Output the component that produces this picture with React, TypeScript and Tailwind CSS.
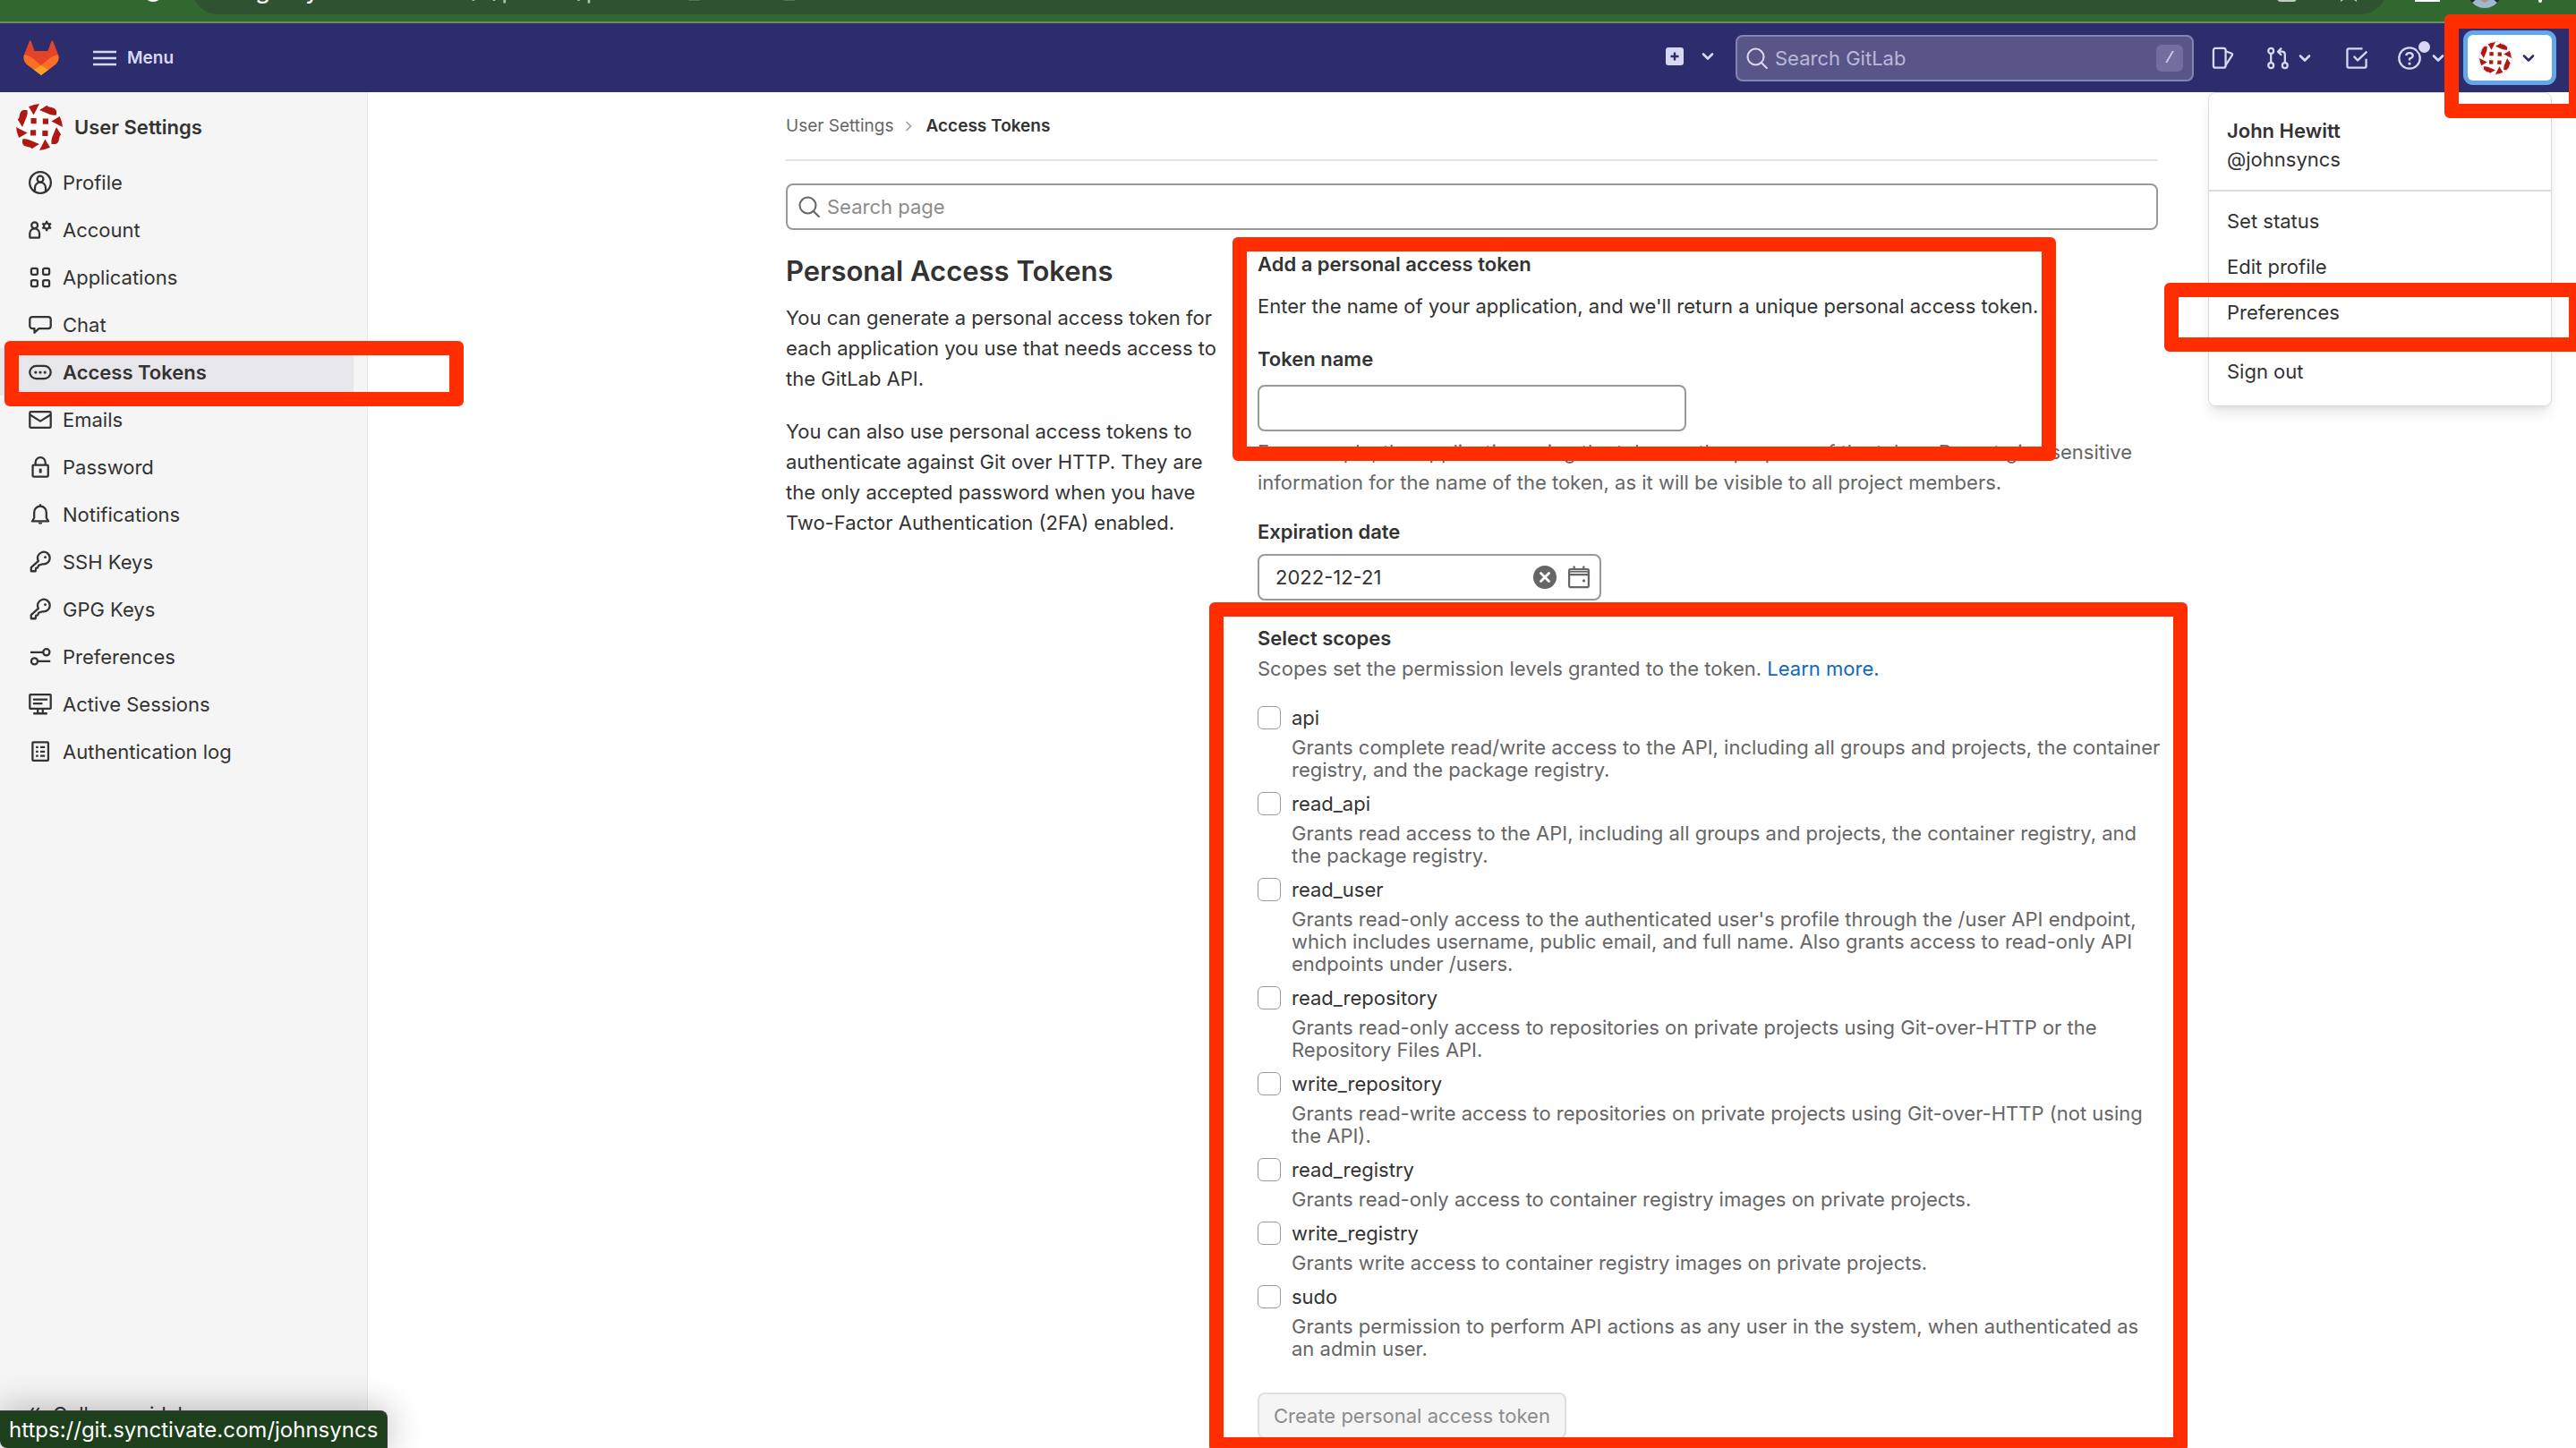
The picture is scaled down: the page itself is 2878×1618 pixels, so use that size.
import type { ReactNode } from "react";

type IconProps = { children: ReactNode; className?: string };

function Icon({ children, className = "size-[26px]" }: IconProps) {
  return (
    <svg
      viewBox="0 0 16 16"
      className={`shrink-0 ${className}`}
      fill="none"
      stroke="currentColor"
      strokeWidth="1.4"
      strokeLinejoin="round"
      aria-hidden="true"
    >
      {children}
    </svg>
  );
}

function Chevron({ className = "" }: { className?: string }) {
  return (
    <svg viewBox="0 0 14 14" className={`size-[14px] shrink-0 ${className}`} fill="none" stroke="currentColor" strokeWidth="2.6" strokeLinecap="round" strokeLinejoin="round" aria-hidden="true">
      <path d="M2 4.5l5 5 5-5" />
    </svg>
  );
}

function SearchIcon({ className = "size-6" }: { className?: string }) {
  return (
    <Icon className={className}>
      <circle cx="7" cy="7" r="6" />
      <path d="M11.2 11.4l4 4" strokeLinecap="round" />
    </Icon>
  );
}

function Identicon({ className = "" }: { className?: string }) {
  return (
    <svg viewBox="0 0 52 52" className={`shrink-0 ${className}`} aria-hidden="true">
      <circle cx="26" cy="26" r="26" fill="#fff" />
      <g fill="#ae1a13">
        {[0, 90, 180, 270].map((a) => (
          <g key={a} transform={`rotate(${a} 26 26)`}>
            <path d="M14 3.2Q20 .4 26 0l-6.4 12.6z" />
            <path d="M26 7l8.500-5.300q1 2 4 2 6 1 6.500 4.500v4.300q-4 .5-7-.5z" />
            <rect x="16.500" y="16" width="6.200" height="6.200" />
          </g>
        ))}
      </g>
    </svg>
  );
}

const keyIcon = (
  <Icon>
    <path d="M6.700 7.300A4.200 4.200 0 1 1 9.600 9.400L7 10.200l-.8 1.700-1.200.3-.3 2.100H1.700v-2.500z" />
    <circle cx="11.400" cy="4.700" r=".9" fill="currentColor" stroke="none" />
  </Icon>
);

const navItems: { label: string; icon: ReactNode; active?: boolean }[] = [
  {
    label: "Profile",
    icon: (
      <Icon>
        <circle cx="8" cy="8" r="7.300" />
        <circle cx="8" cy="5.600" r="2.100" />
        <path d="M4.300 13.800v-2.300a3.700 3.700 0 0 1 7.400 0v2.300" />
      </Icon>
    ),
  },
  {
    label: "Account",
    icon: (
      <Icon>
        <circle cx="4.100" cy="4.800" r="2.100" />
        <path d="M.8 12.900v-2.600a3.300 3.300 0 0 1 6.600 0v2.600q0 .4-.4.4H1.200q-.4 0-.4-.4z" />
        <circle cx="12.400" cy="5.200" r="1.900" />
        <path d="M12.400 1.700v1.600M12.400 7.100v1.600M9.400 3.500l1.300.8M14.100 6.100l1.300.8M9.400 6.900l1.300-.8M14.100 4.300l1.300-.8" />
      </Icon>
    ),
  },
  {
    label: "Applications",
    icon: (
      <Icon>
        <rect x="1.800" y="1.800" width="4.300" height="4.300" rx="1" />
        <rect x="9.900" y="1.800" width="4.300" height="4.300" rx="1" />
        <rect x="1.800" y="9.900" width="4.300" height="4.300" rx="1" />
        <rect x="9.900" y="9.900" width="4.300" height="4.300" rx="1" />
      </Icon>
    ),
  },
  {
    label: "Chat",
    icon: (
      <Icon>
        <path d="M2.600 2.500h10.800a1.800 1.800 0 0 1 1.800 1.800v4.400a1.800 1.800 0 0 1-1.800 1.800H7L4 13.400v-2.900H2.600A1.800 1.800 0 0 1 .8 8.700V4.300a1.800 1.800 0 0 1 1.800-1.800z" />
      </Icon>
    ),
  },
  {
    label: "Access Tokens",
    active: true,
    icon: (
      <Icon>
        <rect x=".8" y="3.600" width="14.400" height="8.800" rx="4.400" />
        <g fill="currentColor" stroke="none">
          <circle cx="4.800" cy="8" r="1" />
          <circle cx="8" cy="8" r="1" />
          <circle cx="11.200" cy="8" r="1" />
        </g>
      </Icon>
    ),
  },
  {
    label: "Emails",
    icon: (
      <Icon>
        <rect x=".8" y="2.500" width="14.400" height="11" rx=".8" />
        <path d="M1 4.600l7 4.400 7-4.400" />
      </Icon>
    ),
  },
  {
    label: "Password",
    icon: (
      <Icon>
        <rect x="2.800" y="6.500" width="10.600" height="8" rx=".6" />
        <path d="M4.700 6.500V4.700a3.400 3.400 0 0 1 6.800 0v1.800" />
        <path d="M8.100 9v3" strokeWidth="1.800" />
      </Icon>
    ),
  },
  {
    label: "Notifications",
    icon: (
      <Icon>
        <path d="M2.400 12.600h11.200l-1.400-2.300V6.400a4.200 4.200 0 0 0-8.400 0v3.900z" />
        <path d="M8 .8v1.400" />
        <path d="M6.600 13.400a1.400 1.200 0 0 0 2.800 0z" fill="currentColor" stroke="none" />
      </Icon>
    ),
  },
  { label: "SSH Keys", icon: keyIcon },
  { label: "GPG Keys", icon: keyIcon },
  {
    label: "Preferences",
    icon: (
      <Icon>
        <circle cx="12.200" cy="4.800" r="2.200" />
        <circle cx="4" cy="11" r="2.200" />
        <path d="M1.200 4.800H10M6.200 11h8.700" />
      </Icon>
    ),
  },
  {
    label: "Active Sessions",
    icon: (
      <Icon>
        <rect x=".8" y="1.300" width="14.400" height="9.700" rx=".4" />
        <path d="M3 4.700h10M3 7.500h6.500M6.300 11v3M9.700 11v3M3.200 14.300h9.600" />
      </Icon>
    ),
  },
  {
    label: "Authentication log",
    icon: (
      <Icon>
        <rect x="2.700" y="1.500" width="10.800" height="12.600" rx=".5" />
        <path d="M5 4.900h1.600M8 4.900h3.200M5 7.900h1.600M8 7.900h3.200M5 10.900h1.600M8 10.900h3.200" />
      </Icon>
    ),
  },
];

const scopes = [
  ["api", "Grants complete read/write access to the API, including all groups and projects, the container registry, and the package registry."],
  ["read_api", "Grants read access to the API, including all groups and projects, the container registry, and the package registry."],
  ["read_user", "Grants read-only access to the authenticated user's profile through the /user API endpoint, which includes username, public email, and full name. Also grants access to read-only API endpoints under /users."],
  ["read_repository", "Grants read-only access to repositories on private projects using Git-over-HTTP or the Repository Files API."],
  ["write_repository", "Grants read-write access to repositories on private projects using Git-over-HTTP (not using the API)."],
  ["read_registry", "Grants read-only access to container registry images on private projects."],
  ["write_registry", "Grants write access to container registry images on private projects."],
  ["sudo", "Grants permission to perform API actions as any user in the system, when authenticated as an admin user."],
];

function BrowserBar() {
  return (
    <div className="flex h-[26px] items-end overflow-hidden border-b-2 border-[#688f68] bg-[#31682f] pr-[38px] pl-[160px]">
      <span className="mr-[33px] mb-[22px] size-[22px] rounded-full border-2 border-white" />
      <div className="mb-2 flex h-14 flex-1 items-center rounded-full bg-[#2f5230] pr-7 pl-[70px] text-[28px] leading-[34px] text-[#b4c3b4]">
        <span className="text-white">git.synctivate.com</span>
        <span>/-/profile/personal_access_tokens</span>
        <span className="ml-auto flex h-7 items-end gap-11">
          <span className="h-7 w-[22px] rounded-[4px] bg-[#c3cbc3]" />
          <svg viewBox="0 0 24 24" className="size-7" fill="none" stroke="#c3cbc3" strokeWidth="2" aria-hidden="true">
            <path d="M12 2l3 7 7 .6-5.300 4.700L18.500 22 12 18l-6.500 4 1.800-7.700L2 9.600 9 9z" />
          </svg>
        </span>
      </div>
      <span className="mb-[22px] ml-8 h-7 w-7 bg-white" />
      <svg viewBox="0 0 40 40" className="mb-[14px] ml-[30px] size-10" aria-hidden="true">
        <circle cx="20" cy="20" r="19" fill="#1d2422" />
        <path d="M6 33l6-5h16l6 5q-6 6-14 6T6 33z" fill="#9fb9cf" />
        <path d="M13 20h14l-2 10-5 3-5-3z" fill="#b98f7c" />
      </svg>
      <span className="mb-[21px] ml-10 h-7 w-1 rounded-full bg-white" />
    </div>
  );
}

function UserMenu() {
  return (
    <div className="absolute top-[77px] right-[27px] z-10 w-[384px] rounded-lg border border-[#dbdbdb] bg-white px-5 pt-[26px] pb-[21px] text-[#333] shadow-lg">
      <p className="leading-8 font-semibold">John Hewitt</p>
      <p className="leading-8">@johnsyncs</p>
      <hr className="-mx-5 mt-[18px] mb-4 border-t-2 border-[#dbdbdb]" />
      <div className="flex flex-col gap-[17px]">
        <a href="#status">Set status</a>
        <a href="#edit">Edit profile</a>
        <a href="#preferences">Preferences</a>
      </div>
      <hr className="-mx-5 mt-3 mb-[18px] border-t-2 border-[#dbdbdb]" />
      <a href="#signout">Sign out</a>
    </div>
  );
}

function NavBar() {
  return (
    <header className="relative flex h-[77px] items-center bg-[#2d2d6d] pr-[27px] pl-[26px] text-[#d9d8f2]">
      <a href="#home" aria-label="GitLab">
        <svg viewBox="0 0 40 39" className="h-[39px] w-10" aria-hidden="true">
          <path d="M1 16L6.800 1q.9-1.600 1.800 0l4 11h14.800l4-11q.9-1.600 1.800 0L39 16 20 39z" fill="#e24329" />
          <path d="M1 16q6.500 1 13 7l6 5 6-5q6.500-6 13-7 2.300 6-2.500 10.700L20 39 3.500 26.700Q-1.300 22 1 16z" fill="#fc6d26" />
          <path d="M20 28l8 5-8 6-8-6z" fill="#fca326" />
        </svg>
      </a>
      <button type="button" className="ml-[38px] flex items-center gap-3 text-[19px] font-semibold">
        <svg viewBox="0 0 26 18" className="h-[18px] w-[26px]" stroke="currentColor" strokeWidth="2.400" aria-hidden="true">
          <path d="M0 2h26M0 9h26M0 16h26" />
        </svg>
        Menu
      </button>
      <button type="button" aria-label="Create new" className="mb-1 ml-auto flex items-center gap-5">
        <svg viewBox="0 0 20 20" className="size-5" aria-hidden="true">
          <rect width="20" height="20" rx="3" fill="currentColor" />
          <path d="M10 5.500v9M5.500 10h9" stroke="#2d2d6d" strokeWidth="2.400" />
        </svg>
        <Chevron />
      </button>
      <label className="ml-6 flex h-[52px] w-[512px] items-center gap-2 rounded-lg border-2 border-[#8583b4] bg-[#585689] px-[10px]">
        <SearchIcon />
        <input type="text" aria-label="Search GitLab" placeholder="Search GitLab" className="min-w-0 flex-1 bg-transparent placeholder:text-[#bab8da] focus:outline-none" />
        <kbd className="flex h-[30px] w-[30px] items-center justify-center rounded-md bg-[#716f9f] font-mono text-[19px]">/</kbd>
      </label>
      <button type="button" aria-label="Issues" className="ml-[19px]">
        <Icon>
          <rect x="1.800" y="1.200" width="8.400" height="13.400" rx="1.400" />
          <path d="M10.200 3.200l4.200 1.600q.6.300.4.900l-4.600 7.100" />
        </Icon>
      </button>
      <button type="button" aria-label="Merge requests" className="ml-9 flex items-center gap-[10px]">
        <Icon>
          <circle cx="3.200" cy="3" r="1.800" />
          <circle cx="3.200" cy="13" r="1.800" />
          <circle cx="12.800" cy="13" r="1.800" />
          <path d="M3.200 4.800v6.400M12.800 11.200V5.500q0-2-2-2H8.500M10.500 1L8 3.500 10.500 6" />
        </Icon>
        <Chevron />
      </button>
      <button type="button" aria-label="To-do list" className="ml-[38px]">
        <Icon>
          <path d="M14.500 8.500v5q0 1-1 1h-11q-1 0-1-1v-11q0-1 1-1H12" />
          <path d="M6 6.700L8.700 9.500 15 3.500" />
        </Icon>
      </button>
      <button type="button" aria-label="Help" className="relative ml-[33px] flex items-center gap-3">
        <Icon>
          <circle cx="8" cy="8" r="7.200" />
          <path d="M5.700 6.300Q5.900 4.400 8 4.400t2.300 1.900Q10.300 7.500 8 8.400v1.200" />
          <circle cx="8" cy="11.700" r="1" fill="currentColor" stroke="none" />
        </Icon>
        <span className="absolute -top-2 left-[21px] size-[17px] rounded-full border-2 border-[#2d2d6d] bg-[#d9d8f2]" />
        <Chevron />
      </button>
      <button type="button" aria-label="User menu" className="ml-[26px] flex h-[51px] w-[94px] items-center justify-between rounded-md bg-white pr-[19px] pl-[13px] text-[#2d2d6d] ring-[5px] ring-[#63a6e9]">
        <Identicon className="size-9 rounded-full ring-1 ring-[#dcdcf2]" />
        <Chevron />
      </button>
      <UserMenu />
    </header>
  );
}

function Sidebar() {
  return (
    <aside className="flex w-[411px] shrink-0 flex-col border-r border-[#e6e6e6] bg-[#f5f5f5] pt-[13px] pr-[15px]">
      <a href="#settings" className="flex items-center gap-[13px] pl-[18px] font-semibold">
        <Identicon className="size-[52px]" />
        User Settings
      </a>
      <nav className="mt-[9px] flex flex-col">
        {navItems.map((item) => (
          <a
            key={item.label}
            href="#nav"
            className={`flex h-[53px] items-center gap-3 pl-8 ${item.active ? "bg-[#e7e6eb] font-semibold" : ""}`}
          >
            {item.icon}
            {item.label}
          </a>
        ))}
      </nav>
      <button type="button" className="mt-auto mb-[21px] flex items-center gap-[14px] pl-[31px]">
        <svg viewBox="0 0 14 16" className="h-[18px] w-[14px]" fill="none" stroke="currentColor" strokeWidth="2" aria-hidden="true">
          <path d="M6.500 1L1.500 8l5 7M12.500 1l-5 7 5 7" />
        </svg>
        Collapse sidebar
      </button>
    </aside>
  );
}

function TokenForm() {
  return (
    <form className="col-span-2">
      <h2 className="font-semibold">Add a personal access token</h2>
      <p className="mt-[13px]">Enter the name of your application, and we'll return a unique personal access token.</p>
      <label htmlFor="token-name" className="mt-[25px] block font-semibold">Token name</label>
      <input id="token-name" type="text" className="mt-3 block h-[52px] w-[479px] rounded-lg border-2 border-[#999] px-4" />
      <p className="mt-[6px] text-[#666]">
        For example, the application using the token or the purpose of the token. Do not give sensitive information for the name of the token, as it will be visible to all project members.
      </p>
      <label htmlFor="expires" className="mt-[21px] block font-semibold">Expiration date</label>
      <div className="mt-2 flex h-[52px] w-[384px] items-center rounded-lg border-2 border-[#999] pr-[10px] pl-[18px]">
        <input id="expires" type="text" defaultValue="2022-12-21" className="min-w-0 flex-1 focus:outline-none" />
        <button type="button" aria-label="Clear date">
          <svg viewBox="0 0 26 26" className="size-[26px]" aria-hidden="true">
            <circle cx="13" cy="13" r="13" fill="#666" />
            <path d="M8.500 8.500l9 9M17.500 8.500l-9 9" stroke="#fff" strokeWidth="2.800" strokeLinecap="round" />
          </svg>
        </button>
        <button type="button" aria-label="Open calendar" className="ml-3 text-[#666]">
          <Icon>
            <rect x="1.300" y="2.600" width="13.400" height="12.200" rx=".8" />
            <path d="M1.300 6.200h13.400M4.700.3v2.300M11.300.3v2.300" />
            <path d="M1.300 4.200h13.400" strokeWidth="1" />
            <circle cx="11.400" cy="10.400" r="1" fill="currentColor" stroke="none" />
          </Icon>
        </button>
      </div>
      <fieldset className="mt-[25px]">
        <legend className="font-semibold">Select scopes</legend>
        <p className="text-[#666]">
          Scopes set the permission levels granted to the token.{" "}
          <a href="#learn" className="text-[#1068bf]">Learn more.</a>
        </p>
        <div className="-mr-2 mt-[21px] flex flex-col gap-2">
          {scopes.map(([name, text]) => (
            <div key={name} className="flex gap-3">
              <input id={name} type="checkbox" className="mt-1 size-[26px] shrink-0 appearance-none rounded-[6px] border border-[#999]" />
              <div>
                <label htmlFor={name} className="block">{name}</label>
                <p className="mt-1 leading-[25px] text-[#666]">{text}</p>
              </div>
            </div>
          ))}
        </div>
      </fieldset>
      <button type="button" disabled className="mt-9 h-[52px] rounded-lg border-2 border-[#dfdfdf] bg-[#f5f5f5] px-4 text-[#8c8c8c]">
        Create personal access token
      </button>
    </form>
  );
}

export default function App() {
  return (
    <div className="relative flex h-screen flex-col overflow-hidden bg-white font-['Inter',sans-serif] text-[22px] leading-[34px] text-[#333]">
      <BrowserBar />
      <NavBar />
      <div className="flex min-h-0 flex-1">
        <Sidebar />
        <main className="min-w-0 flex-1">
          <div className="mx-auto max-w-[1533px]">
            <nav aria-label="Breadcrumb" className="flex h-[77px] items-center gap-3 border-b-2 border-[#e3e3e3] text-[19px]">
              <a href="#settings" className="text-[#666]">User Settings</a>
              <svg viewBox="0 0 8 12" className="h-3 w-2" fill="none" stroke="#999" strokeWidth="1.500" aria-hidden="true">
                <path d="M1.500 1l5 5-5 5" />
              </svg>
              <a href="#tokens" className="ml-1 font-semibold">Access Tokens</a>
            </nav>
            <label className="mt-[25px] flex h-[52px] items-center gap-2 rounded-lg border-2 border-[#999] px-3 text-[#666]">
              <SearchIcon />
              <input type="text" aria-label="Search page" placeholder="Search page" className="min-w-0 flex-1 placeholder:text-[#8c8c8c] focus:outline-none" />
            </label>
            <div className="mt-[21px] grid grid-cols-3 gap-12">
              <section className="-mr-3">
                <h1 className="mt-1 text-[31px] leading-[42px] font-semibold">Personal Access Tokens</h1>
                <p className="mt-[14px]">You can generate a personal access token for each application you use that needs access to the GitLab API.</p>
                <p className="mt-[25px]">You can also use personal access tokens to authenticate against Git over HTTP. They are the only accepted password when you have Two-Factor Authentication (2FA) enabled.</p>
              </section>
              <TokenForm />
            </div>
          </div>
        </main>
      </div>

      <div className="pointer-events-none absolute top-[381px] left-[5px] h-[73px] w-[513px] rounded-md border-16 border-[#ff2d00]" />
      <div className="pointer-events-none absolute top-[265px] left-[1377px] h-[250px] w-[920px] rounded-md border-16 border-[#ff2d00]" />
      <div className="pointer-events-none absolute top-[673px] left-[1351px] h-[949px] w-[1093px] rounded-md border-16 border-[#ff2d00]" />
      <div className="pointer-events-none absolute top-4 -right-2 z-20 h-[116px] w-[155px] rounded-md border-16 border-[#ff2d00]" />
      <div className="pointer-events-none absolute top-[316px] -right-2 z-20 h-[77px] w-[468px] rounded-md border-16 border-[#ff2d00]" />

      <div className="absolute bottom-0 left-0 rounded-tr-lg rounded-bl-lg border-t border-r border-[#3b3b3b] bg-[#1d3f1b] px-[10px] pt-1 pb-[3px] text-[24px] leading-[34px] text-white shadow-[0_0_40px_rgba(0,0,0,0.3)]">
        https://git.synctivate.com/johnsyncs
      </div>
    </div>
  );
}
